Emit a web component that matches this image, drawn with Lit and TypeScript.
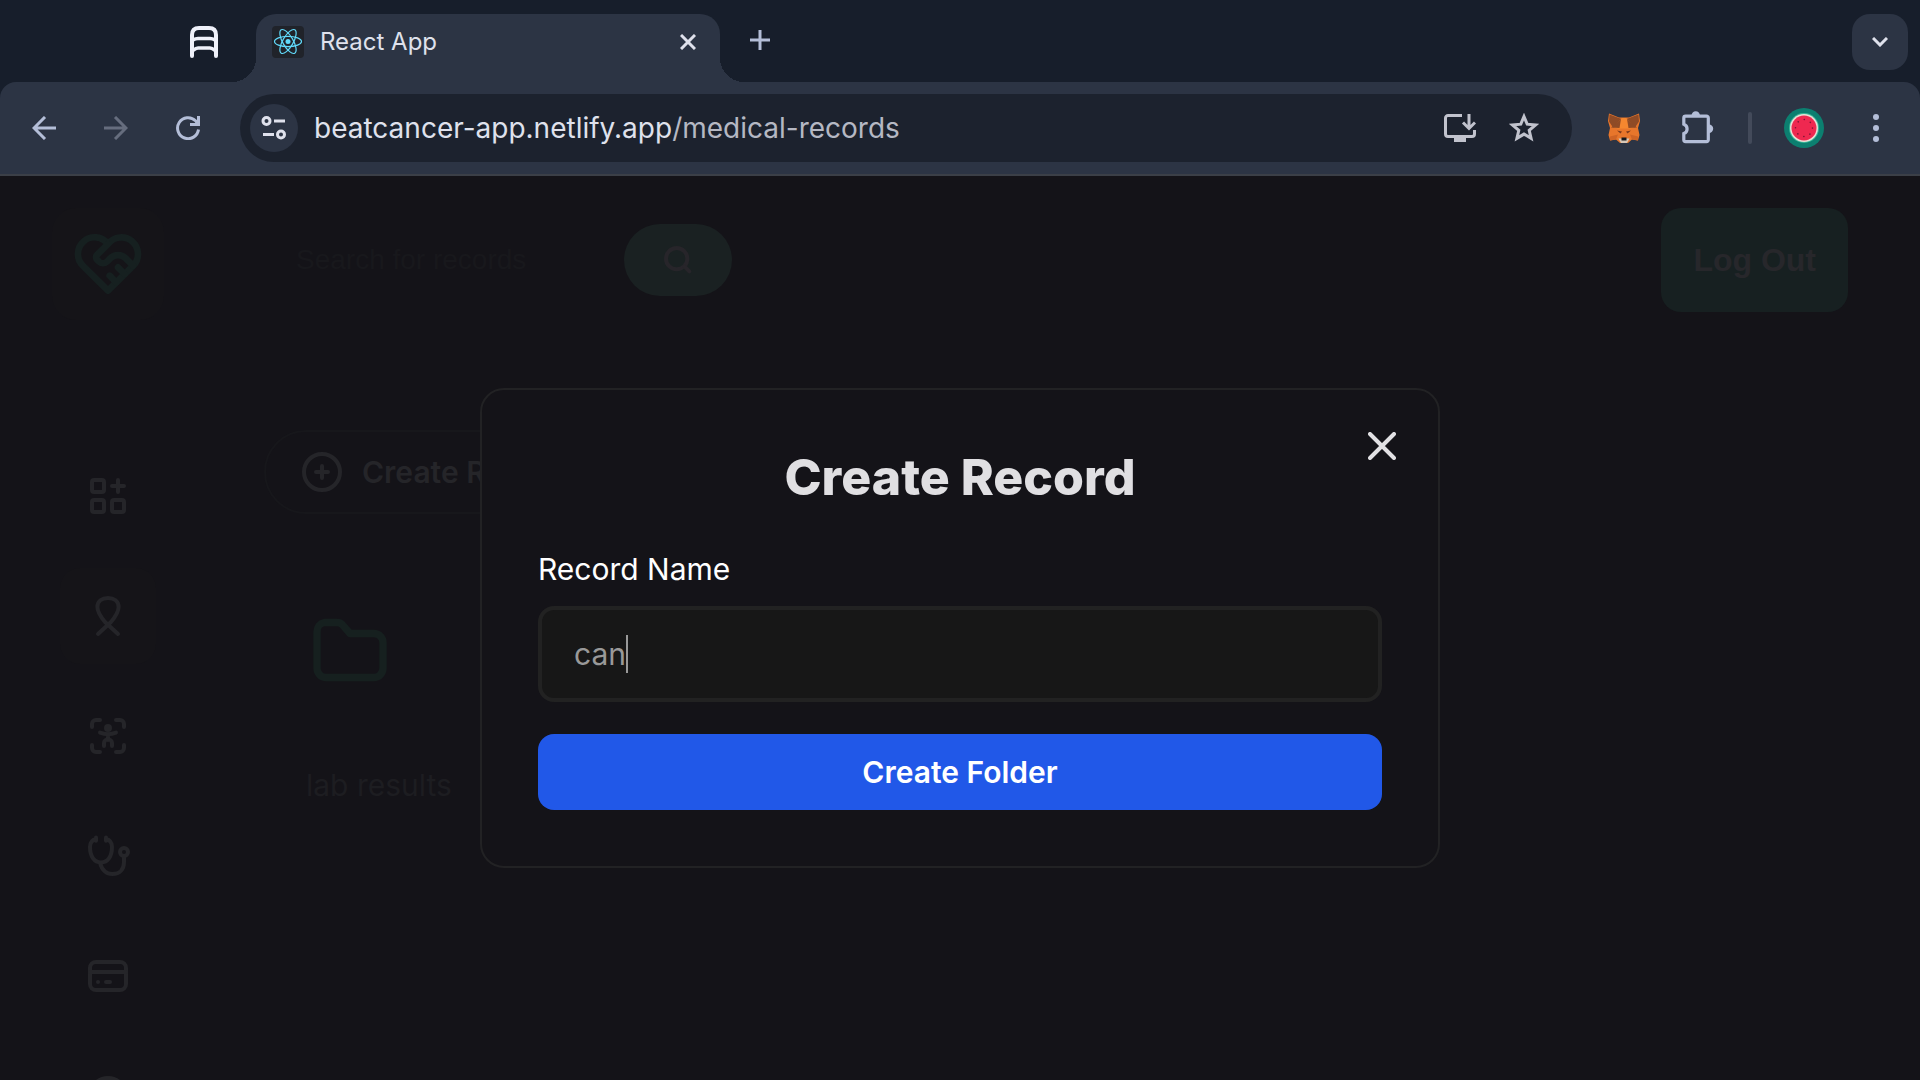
import { LitElement, html, css, svg } from "lit";
import { customElement, state } from "lit/decorators.js";

const gridIcon = svg`<rect x="4" y="4" width="6" height="6" rx="1"/><rect x="4" y="14" width="6" height="6" rx="1"/><rect x="14" y="14" width="6" height="6" rx="1"/><path d="M17 4v6M14 7h6"/>`;
const ribbonIcon = svg`<path d="M7 21l6.500-6C16 12 17.300 10 17.300 7.500C17.300 4.600 15 3 12 3S6.700 4.600 6.700 7.500C6.700 10 8 12 10.500 15L17 21"/>`;
const scanIcon = svg`<path d="M4 7.500V6a2 2 0 0 1 2-2h2M16 4h2a2 2 0 0 1 2 2v1.500M20 16.500V18a2 2 0 0 1-2 2h-2M8 20H6a2 2 0 0 1-2-2v-1.500"/><circle cx="12" cy="8" r="1"/><path d="M8 10.300c2.500 1 5.500 1 8 0M12 11v3M10 17v-1.500c0-1 .8-1.700 2-1.700s2 .7 2 1.700V17"/>`;
const stethoscopeIcon = svg`<path d="M6 3.500C4 4 3 5 3 7.500C3 12 5 15.200 8.500 15.200S14 12 14 7.500C14 5 13 4 11 3.500M6 2.700v1.700M11 2.700v1.700M8 15.500C9 19 11 21 14.200 21C18 21 20 18.500 20 15v-3"/><circle cx="20" cy="10" r="2"/>`;
const cardIcon = svg`<rect x="3" y="5" width="18" height="14" rx="3"/><path d="M3 10h18M7 15h.01M11 15h2"/>`;
const settingsIcon = svg`<circle cx="12" cy="12" r="9"/>`;

@customElement("browser-bar")
export class BrowserBar extends LitElement {
  static styles = css`
    :host {
      display: block;
      background: #171e2b;
      color: #dfe1ec;
      font-family: Inter, "Liberation Sans", sans-serif;
    }
    button {
      border: 0;
      padding: 0;
      background: none;
      color: #b4bed8;
      display: grid;
      place-items: center;
      flex: none;
    }
    svg {
      display: block;
      fill: none;
      stroke: currentColor;
    }
    .solid {
      stroke: none;
    }
    .tabs {
      display: flex;
      align-items: flex-end;
      height: 82px;
      box-sizing: border-box;
      padding: 0 12px 0 180px;
    }
    .pinned {
      width: 48px;
      height: 80px;
      color: #eff1fa;
    }
    .tab {
      position: relative;
      display: flex;
      align-items: center;
      flex: 0 1 464px;
      height: 68px;
      box-sizing: border-box;
      margin-left: 28px;
      padding: 0 20px 12px 16px;
      border-radius: 20px 20px 0 0;
      background: #2c3444;
    }
    .tab::before,
    .tab::after {
      content: "";
      position: absolute;
      bottom: 0;
      width: 24px;
      height: 24px;
    }
    .tab::before {
      right: 100%;
      background: radial-gradient(circle at 0 0, transparent 24px, #2c3444 24px);
    }
    .tab::after {
      left: 100%;
      background: radial-gradient(circle at 100% 0, transparent 24px, #2c3444 24px);
    }
    .title {
      flex: 1;
      margin-left: 16px;
      font-size: 24px;
      line-height: 32px;
    }
    .close {
      width: 24px;
      height: 24px;
      color: #dfe1ec;
    }
    .new {
      width: 40px;
      height: 84px;
      margin-left: 20px;
    }
    .list {
      width: 56px;
      height: 56px;
      margin: 0 0 12px auto;
      border-radius: 18px;
      background: #2c3444;
      color: #dfe1ec;
    }
    .toolbar {
      display: flex;
      align-items: center;
      height: 92px;
      padding: 0 24px;
      border-radius: 16px 16px 0 0;
      background: #2c3444;
      border-bottom: 2px solid #3b3f47;
    }
    .nav {
      display: flex;
      gap: 32px;
      margin-right: 32px;
    }
    .nav button {
      width: 40px;
      height: 40px;
    }
    .nav .off {
      color: #666d7e;
    }
    .address {
      display: flex;
      align-items: center;
      flex: 1;
      height: 68px;
      box-sizing: border-box;
      padding: 0 28px 0 10px;
      border-radius: 34px;
      background: #1c222e;
    }
    .address button {
      width: 40px;
      height: 40px;
      margin-left: 24px;
      color: #c1c3cd;
    }
    .address .site {
      width: 48px;
      height: 48px;
      margin: 0;
      border-radius: 50%;
      background: #2c3444;
      color: #dfe1ec;
    }
    .url {
      flex: 1;
      min-width: 0;
      margin-left: 16px;
      font-size: 28px;
      line-height: 36px;
      white-space: nowrap;
      overflow: hidden;
    }
    .path {
      color: #b5b8c3;
    }
    .extras {
      display: flex;
      align-items: center;
      margin-left: 32px;
    }
    .extras button {
      width: 40px;
      height: 40px;
    }
    .extras .puzzle {
      margin-left: 34px;
    }
    .divider {
      width: 4px;
      height: 32px;
      margin: 0 32px 0 30px;
      border-radius: 2px;
      background: #434a5a;
    }
    .extras .menu {
      margin-left: 32px;
    }
  `;

  render() {
    return html`
      <div class="tabs">
        <button class="pinned" aria-label="Pinned tab">
          <svg width="28" height="32" viewBox="0 0 28 32" stroke-width="4" stroke-linecap="round">
            <path d="M2 30V9c0-4.500 2.500-7 7-7h10c4.500 0 7 2.500 7 7v21" />
            <path d="M3 14c2-1.200 3-1.500 5-1.500h12c2 0 3 .3 5 1.500M3 24.500c2-1.700 3-2.500 5-2.500h12c2 0 3 .8 5 2.500" stroke-width="3.500" />
          </svg>
        </button>
        <div class="tab">
          <svg class="solid" width="32" height="32" viewBox="0 0 32 32">
            <rect width="32" height="32" rx="4" fill="#20232a" />
            <g fill="none" stroke="#61dafb" stroke-width="1.200">
              <ellipse cx="16" cy="15.500" rx="13.500" ry="5.200" />
              <ellipse cx="16" cy="15.500" rx="13.500" ry="5.200" transform="rotate(60 16 15.500)" />
              <ellipse cx="16" cy="15.500" rx="13.500" ry="5.200" transform="rotate(120 16 15.500)" />
            </g>
            <circle cx="16" cy="15.500" r="2.500" fill="#61dafb" />
          </svg>
          <span class="title">React App</span>
          <button class="close" aria-label="Close tab">
            <svg width="16" height="16" viewBox="0 0 16 16" stroke-width="3"><path d="M1 1l14 14M15 1L1 15" /></svg>
          </button>
        </div>
        <button class="new" aria-label="New tab">
          <svg width="20" height="20" viewBox="0 0 20 20" stroke-width="3"><path d="M10 0v20M0 10h20" /></svg>
        </button>
        <button class="list" aria-label="Search tabs">
          <svg width="16" height="10" viewBox="0 0 16 10" stroke-width="3"><path d="M1 1l7 7l7-7" /></svg>
        </button>
      </div>
      <div class="toolbar">
        <div class="nav">
          <button aria-label="Back">
            <svg width="24" height="24" viewBox="0 0 24 24" stroke-width="3"><path d="M24 12H2M13 1L2 12l11 11" /></svg>
          </button>
          <button class="off" aria-label="Forward">
            <svg width="24" height="24" viewBox="0 0 24 24" stroke-width="3"><path d="M0 12h22M11 1l11 11l-11 11" /></svg>
          </button>
          <button aria-label="Reload">
            <svg width="24" height="24" viewBox="0 0 24 24" stroke-width="3"><path d="M22.500 13.500A10.500 10.500 0 1 1 19.500 4.700L22 8M22.500 0v8.500H14" /></svg>
          </button>
        </div>
        <div class="address">
          <button class="site" aria-label="Site information">
            <svg width="26" height="24" viewBox="0 0 26 24" stroke-width="3">
              <circle cx="5.500" cy="5" r="3.500" /><path d="M13 5h11M2 18.500h11" /><circle cx="20" cy="18.500" r="3.500" />
            </svg>
          </button>
          <div class="url">beatcancer-app.netlify.app<span class="path">/medical-records</span></div>
          <button aria-label="Install app">
            <svg width="32" height="28" viewBox="0 0 32 28" stroke-width="3">
              <path d="M18 1.500H4A2.500 2.500 0 0 0 1.500 4v16A2.500 2.500 0 0 0 4 22.500h24a2.500 2.500 0 0 0 2.500-2.500v-4M25 0v14M19 8.500l6 6l6-6" />
              <path class="solid" d="M10 23h12v5H10z" fill="currentColor" />
            </svg>
          </button>
          <button aria-label="Bookmark this page">
            <svg width="30" height="30" viewBox="0 0 30 30" stroke-width="3">
              <path d="M15 3.500l3.200 7.700l8.300.7l-6.300 5.400l1.900 8.100l-7.100-4.300l-7.100 4.300l1.900-8.100l-6.300-5.400l8.300-.7z" />
            </svg>
          </button>
        </div>
        <div class="extras">
          <button aria-label="MetaMask">
            <svg class="solid" width="32" height="30" viewBox="0 0 32 30">
              <path d="M1 0.500L11 4.500H21L31 0.500L32 8L30 15L31.500 22L30 27.500L24 26.500L20 30H12L8 26.500L2 27.500L0.500 22L2 15L0 8z" fill="#e8762b" />
              <path d="M1.500 1.500L13.500 6L11.500 14.500L5 14.500L1 8.500zM30.500 1.500L18.500 6L20.500 14.500L27 14.500L31 8.500z" fill="#8f4b26" />
              <path d="M5 14L14 5H18L27 14L22 15.500H10z" fill="#f5872f" />
              <path d="M13 6L3 14.500L11.500 15zM19 6L29 14.500L20.500 15z" fill="#8f4b26" />
              <path d="M9 17.500L14 18.500L12.500 20.500zM23 17.500L18 18.500L19.500 20.500z" fill="#7c3a1d" />
              <path d="M2 23.500L10 21.500L8 26.500L2 27.500zM30 23.500L22 21.500L24 26.500L30 27.500z" fill="#cf6425" />
              <path d="M10.500 25.500H21.500L19 30H13z" fill="#d8c8b8" />
              <path d="M13.500 24.500H18.500V27.500H13.500z" fill="#17191f" />
            </svg>
          </button>
          <button class="puzzle" aria-label="Extensions">
            <svg width="32" height="34" viewBox="0 0 32 34" stroke-width="3.200">
              <path d="M3.600 5.200h20.900a1.800 1.800 0 0 1 1.800 1.800v21.800a1.800 1.800 0 0 1-1.800 1.800H3.600a1.800 1.800 0 0 1-1.800-1.800v-6.200a5 5 0 0 0 0-9.400V7A1.800 1.800 0 0 1 3.600 5.200z" />
              <path class="solid" d="M9.500 4.500a4 4 0 0 1 8.500 0zM27 13.500a4.200 4.200 0 0 1 0 8.400z" fill="currentColor" />
            </svg>
          </button>
          <span class="divider"></span>
          <button aria-label="Profile">
            <svg class="solid" width="40" height="40" viewBox="0 0 40 40">
              <circle cx="20" cy="20" r="20" fill="#0c7f70" />
              <circle cx="20" cy="20" r="15" fill="#3bb99b" />
              <circle cx="20" cy="20" r="14" fill="#eadfd6" />
              <circle cx="20" cy="20" r="12.500" fill="#ef2850" />
              <circle cx="20" cy="20" r="8.500" fill="none" stroke="#7c1733" stroke-width="1.600" stroke-linecap="round" stroke-dasharray=".1 6.580" />
            </svg>
          </button>
          <button class="menu" aria-label="Browser menu">
            <svg class="solid" width="6" height="28" viewBox="0 0 6 28">
              <circle cx="3" cy="3" r="3" fill="currentColor" /><circle cx="3" cy="14" r="3" fill="currentColor" /><circle cx="3" cy="25" r="3" fill="currentColor" />
            </svg>
          </button>
        </div>
      </div>
    `;
  }
}

@customElement("records-page")
export class RecordsPage extends LitElement {
  static styles = css`
    :host {
      display: grid;
      grid-template-columns: 216px 1fr;
      grid-template-rows: auto 1fr;
      color: #252529;
    }
    svg {
      display: block;
      fill: none;
      stroke: currentColor;
      stroke-linecap: round;
      stroke-linejoin: round;
      stroke-width: 2;
    }
    button,
    input {
      border: 0;
      padding: 0;
      background: none;
      color: inherit;
      font: inherit;
    }
    .logo {
      display: grid;
      place-items: center;
      width: 112px;
      height: 112px;
      margin: 32px 52px 0;
      border-radius: 24px;
      background: #151418;
      color: #162020;
    }
    .header {
      display: flex;
      align-items: flex-start;
      justify-content: space-between;
      padding: 32px 72px 0 56px;
    }
    .search {
      display: flex;
      align-items: center;
      height: 104px;
      padding-left: 24px;
    }
    .query {
      width: 304px;
      margin-right: 24px;
      font-family: "Liberation Sans", Arial, sans-serif;
      font-size: 28px;
    }
    .query::placeholder {
      color: #18181c;
      opacity: 1;
    }
    .go {
      display: grid;
      place-items: center;
      width: 108px;
      height: 72px;
      border-radius: 36px;
      background: #1a2122;
      color: #27252a;
    }
    .go svg {
      stroke-width: 3;
    }
    .logout {
      height: 104px;
      padding: 0 32px;
      border-radius: 20px;
      background: #172021;
      color: #27272b;
      font-family: "Liberation Sans", Arial, sans-serif;
      font-size: 32px;
      font-weight: 700;
    }
    .side {
      display: flex;
      flex-direction: column;
      align-items: center;
      gap: 24px;
      padding-top: 128px;
    }
    .side a {
      display: grid;
      place-items: center;
      width: 96px;
      height: 96px;
      border-radius: 20px;
      color: #252529;
    }
    .side .on {
      background: #151418;
    }
    .main {
      display: flex;
      flex-direction: column;
      align-items: flex-start;
      padding: 110px 48px 0;
    }
    .create {
      display: flex;
      align-items: center;
      gap: 16px;
      height: 84px;
      padding: 0 40px 0 32px;
      border: 2px solid #17171b;
      border-radius: 42px;
      box-sizing: border-box;
      font-size: 30px;
      font-weight: 600;
    }
    .folder {
      display: flex;
      flex-direction: column;
      gap: 70px;
      margin: 92px 0 0 42px;
      font-size: 30px;
      line-height: 42px;
      color: #1d1d21;
      text-decoration: none;
    }
    .folder svg {
      color: #16201f;
    }
  `;

  private items = [
    { label: "Dashboard", icon: gridIcon },
    { label: "Records", icon: ribbonIcon, on: true },
    { label: "Screening", icon: scanIcon },
    { label: "Treatment", icon: stethoscopeIcon },
    { label: "Payments", icon: cardIcon },
    { label: "Settings", icon: settingsIcon },
  ];

  render() {
    return html`
      <div class="logo">
        <svg width="80" height="80" viewBox="0 0 24 24">
          <path d="M19.500 12.572L12 20l-7.500-7.428A5 5 0 1 1 12 6.006a5 5 0 1 1 7.500 6.572" />
          <path d="M12 6L8.707 9.293a1 1 0 0 0 0 1.414l.543.543c.69.69 1.810.69 2.500 0l1-1a3.182 3.182 0 0 1 4.500 0l2.250 2.250M12.500 15.500l2 2M15 13l2 2" />
        </svg>
      </div>
      <header class="header">
        <form class="search">
          <input class="query" type="text" aria-label="Search for records" placeholder="Search for records" />
          <button class="go" type="button" aria-label="Search">
            <svg width="32" height="32" viewBox="0 0 24 24"><circle cx="11" cy="11" r="8" /><path d="M17 17l3.500 3.500" /></svg>
          </button>
        </form>
        <button class="logout">Log Out</button>
      </header>
      <nav class="side">
        ${this.items.map(
          (i) => html`<a href="#" class=${i.on ? "on" : ""} aria-label=${i.label}>
            <svg width="48" height="48" viewBox="0 0 24 24">${i.icon}</svg>
          </a>`,
        )}
      </nav>
      <main class="main">
        <button class="create">
          <svg width="48" height="48" viewBox="0 0 24 24"><circle cx="12" cy="12" r="9" /><path d="M12 9v6M9 12h6" /></svg>
          Create Record
        </button>
        <a class="folder" href="#">
          <svg width="88" height="88" viewBox="0 0 24 24">
            <path d="M5 4.500h3.500c.6 0 1 .2 1.400.6L12 7.500h6.500a2.500 2.500 0 0 1 2.500 2.500v7a2.500 2.500 0 0 1-2.500 2.500h-13A2.500 2.500 0 0 1 3 17V7a2.500 2.500 0 0 1 2-2.500z" />
          </svg>
          lab results
        </a>
      </main>
    `;
  }
}

@customElement("record-dialog")
export class RecordDialog extends LitElement {
  static styles = css`
    :host {
      position: relative;
      display: block;
      width: 50%;
      box-sizing: border-box;
      padding: 56px;
      border: 2px solid #222224;
      border-radius: 24px;
      background: #141318;
    }
    button,
    input {
      border: 0;
      padding: 0;
      background: none;
      color: inherit;
      font: inherit;
    }
    .close {
      position: absolute;
      top: 32px;
      right: 32px;
      display: grid;
      place-items: center;
      width: 48px;
      height: 48px;
      color: #e2e1e4;
    }
    .title {
      margin: 0 0 40px;
      text-align: center;
      color: #e0dfe2;
      font-size: 50px;
      line-height: 62px;
      font-weight: 800;
    }
    .label {
      display: block;
      margin-bottom: 16px;
      color: #fff;
      font-size: 30px;
      line-height: 42px;
    }
    .field {
      display: flex;
      align-items: center;
      height: 96px;
      box-sizing: border-box;
      padding: 0 32px;
      margin-bottom: 32px;
      border: 4px solid #222222;
      border-radius: 16px;
      background: #171717;
      color: #999999;
    }
    .field input {
      field-sizing: content;
      max-width: 100%;
      outline: 0;
      font-size: 30px;
      line-height: 40px;
    }
    .caret {
      width: 2px;
      height: 38px;
      background: #999999;
    }
    .submit {
      display: block;
      width: 100%;
      height: 76px;
      border-radius: 16px;
      background: #2158e8;
      color: #fff;
      font-size: 30px;
      font-weight: 600;
    }
  `;

  @state() private name = "can";

  render() {
    return html`
      <button class="close" aria-label="Close">
        <svg width="28" height="28" viewBox="0 0 28 28" fill="none" stroke="currentColor" stroke-width="4" stroke-linecap="round">
          <path d="M2 2l24 24M26 2L2 26" />
        </svg>
      </button>
      <h2 class="title">Create Record</h2>
      <label class="label" for="name">Record Name</label>
      <div class="field">
        <input id="name" type="text" .value=${this.name} @input=${(e: Event) => (this.name = (e.target as HTMLInputElement).value)} />
        <span class="caret"></span>
      </div>
      <button class="submit">Create Folder</button>
    `;
  }
}

@customElement("app-root")
export class AppRoot extends LitElement {
  static styles = css`
    :host {
      display: flex;
      flex-direction: column;
      height: 100vh;
      overflow: hidden;
      background: #141318;
      font-family: Inter, "Open Sans", sans-serif;
    }
    .viewport {
      position: relative;
      flex: 1;
      min-height: 0;
      overflow: hidden;
    }
    .overlay {
      position: absolute;
      inset: 0;
      display: grid;
      place-items: center;
    }
  `;

  render() {
    return html`
      <browser-bar></browser-bar>
      <div class="viewport">
        <records-page></records-page>
        <div class="overlay"><record-dialog role="dialog" aria-label="Create Record"></record-dialog></div>
      </div>
    `;
  }
}
